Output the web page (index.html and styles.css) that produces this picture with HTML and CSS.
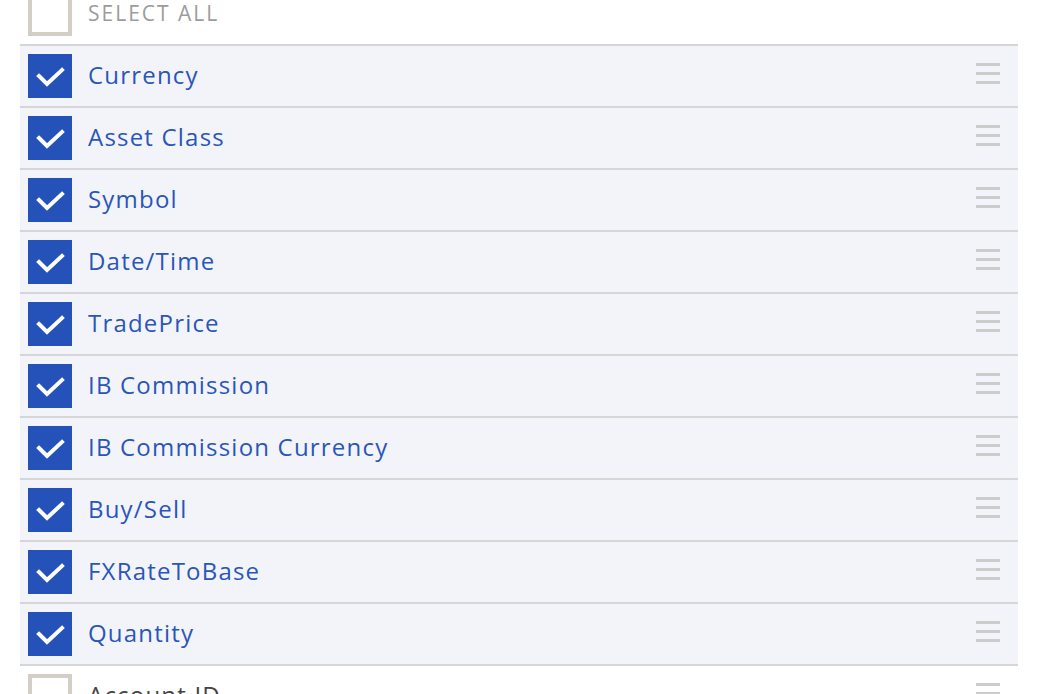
FILE: index.html
```html
<!DOCTYPE html>
<html>
<head>
<meta charset="utf-8">
<link rel="stylesheet" href="styles.css">
</head>
<body>
<div class="list">
  <div class="row row-all">
    <span class="box"></span>
    <span class="label label-all">SELECT ALL</span>
  </div>
  <div class="row on"><span class="box checked"><svg viewBox="0 0 44 44"><path d="M11 22 L19 30 L34 16"/></svg></span><span class="label">Currency</span><span class="handle"><i></i><i></i><i></i></span></div>
  <div class="row on"><span class="box checked"><svg viewBox="0 0 44 44"><path d="M11 22 L19 30 L34 16"/></svg></span><span class="label">Asset Class</span><span class="handle"><i></i><i></i><i></i></span></div>
  <div class="row on"><span class="box checked"><svg viewBox="0 0 44 44"><path d="M11 22 L19 30 L34 16"/></svg></span><span class="label">Symbol</span><span class="handle"><i></i><i></i><i></i></span></div>
  <div class="row on"><span class="box checked"><svg viewBox="0 0 44 44"><path d="M11 22 L19 30 L34 16"/></svg></span><span class="label">Date/Time</span><span class="handle"><i></i><i></i><i></i></span></div>
  <div class="row on"><span class="box checked"><svg viewBox="0 0 44 44"><path d="M11 22 L19 30 L34 16"/></svg></span><span class="label">TradePrice</span><span class="handle"><i></i><i></i><i></i></span></div>
  <div class="row on"><span class="box checked"><svg viewBox="0 0 44 44"><path d="M11 22 L19 30 L34 16"/></svg></span><span class="label">IB Commission</span><span class="handle"><i></i><i></i><i></i></span></div>
  <div class="row on"><span class="box checked"><svg viewBox="0 0 44 44"><path d="M11 22 L19 30 L34 16"/></svg></span><span class="label">IB Commission Currency</span><span class="handle"><i></i><i></i><i></i></span></div>
  <div class="row on"><span class="box checked"><svg viewBox="0 0 44 44"><path d="M11 22 L19 30 L34 16"/></svg></span><span class="label">Buy/Sell</span><span class="handle"><i></i><i></i><i></i></span></div>
  <div class="row on"><span class="box checked"><svg viewBox="0 0 44 44"><path d="M11 22 L19 30 L34 16"/></svg></span><span class="label">FXRateToBase</span><span class="handle"><i></i><i></i><i></i></span></div>
  <div class="row on"><span class="box checked"><svg viewBox="0 0 44 44"><path d="M11 22 L19 30 L34 16"/></svg></span><span class="label">Quantity</span><span class="handle"><i></i><i></i><i></i></span></div>
  <div class="row off"><span class="box"></span><span class="label label-off">Account ID</span><span class="handle"><i></i><i></i><i></i></span></div>
</div>
</body>
</html>
```

FILE: styles.css
```css
html, body {
  margin: 0;
  padding: 0;
  background: #ffffff;
  overflow: hidden;
}
body {
  font-family: "Open Sans", Lato, Arial, sans-serif;
  height: 694px;
}
.list {
  margin: -16px 20px 0 20px;
  display: flex;
  flex-direction: column;
}
.row {
  height: 60px;
  display: flex;
  align-items: center;
  border-bottom: 2px solid #d6d6d6;
}
.row.on {
  background: #f3f4f9;
}
.row-all {
  background: #ffffff;
}
.box {
  width: 44px;
  height: 44px;
  box-sizing: border-box;
  margin-left: 8px;
  border: 4px solid #d3cfc7;
  background: #ffffff;
  flex: none;
  display: block;
}
.box.checked {
  border: none;
  background: #2452b8;
}
.box svg {
  width: 44px;
  height: 44px;
  display: block;
}
.box svg path {
  fill: none;
  stroke: #ffffff;
  stroke-width: 4;
  stroke-linecap: square;
  stroke-linejoin: miter;
}
.label {
  margin-left: 16px;
  font-size: 24px;
  line-height: 30px;
  letter-spacing: 1.2px;
  color: #2a56b9;
  flex: 1;
  margin-top: -2px;
}
.label-all {
  font-size: 21px;
  letter-spacing: 2px;
  color: #9c9c9c;
}
.label-off {
  color: #444444;
}
.handle {
  width: 24px;
  margin-right: 18px;
  margin-top: -5px;
  display: flex;
  flex-direction: column;
  gap: 6px;
}
.handle i {
  display: block;
  height: 3px;
  background: #cccccc;
}
```
